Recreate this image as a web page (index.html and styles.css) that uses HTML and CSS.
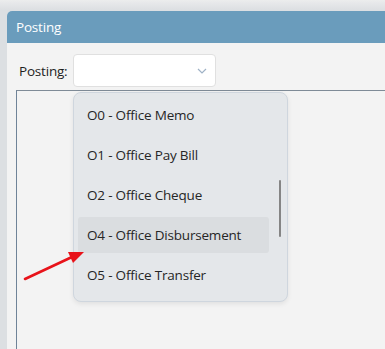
FILE: index.html
```html
<!DOCTYPE html>
<html>
<head>
<meta charset="utf-8">
<link rel="stylesheet" href="styles.css">
</head>
<body>
<div class="page">
  <div class="panel">
    <div class="panel-header">Posting</div>
    <div class="field-row">
      <span class="label">Posting:</span>
      <div class="select">
        <svg class="chev" width="10" height="6" viewBox="0 0 10 6"><path d="M1 1 L5 5 L9 1" fill="none" stroke="#9fb2c6" stroke-width="1.2"/></svg>
      </div>
    </div>
    <div class="grid-box"></div>
  </div>
  <div class="popup">
    <div class="item">O0 - Office Memo</div>
    <div class="item">O1 - Office Pay Bill</div>
    <div class="item">O2 - Office Cheque</div>
    <div class="item active">O4 - Office Disbursement</div>
    <div class="item">O5 - Office Transfer</div>
    <div class="scrollbar"></div>
  </div>
  <svg class="arrow" width="90" height="60" viewBox="0 0 90 60">
    <line x1="25" y1="279" x2="72" y2="257" transform="translate(0,-230)" stroke="#e8131a" stroke-width="2.6" stroke-linecap="round"/>
    <polygon points="84,252 68,252 73,263" transform="translate(0,-230)" fill="#e8131a"/>
  </svg>
</div>
</body>
</html>
```
FILE: styles.css
```css
html, body {
  margin: 0;
  padding: 0;
}
body {
  width: 385px;
  height: 349px;
  overflow: hidden;
  font-family: "Open Sans", "Noto Sans", sans-serif;
  background: #dfe2e5;
}
.page {
  position: relative;
  height: 349px;
  padding: 11px 0 0 7px;
  box-sizing: border-box;
  background: linear-gradient(to bottom, #eceded 0px, #e7e8ea 3px, #dcdfe2 10px, #dcdfe2 11px);
}
.panel {
  height: 338px;
  background: #f3f3f3;
  border-top-left-radius: 5px;
  overflow: hidden;
  display: flex;
  flex-direction: column;
}
.panel-header {
  height: 32px;
  background: #6a9cbc;
  color: #fff;
  font-size: 13.5px;
  letter-spacing: -0.2px;
  line-height: 32px;
  padding-left: 9px;
}
.field-row {
  display: flex;
  align-items: center;
  padding: 11px 0 0 12px;
}
.label {
  width: 54px;
  font-size: 13.5px;
  letter-spacing: -0.2px;
  color: #1e1e1e;
}
.select {
  width: 133px;
  height: 31px;
  background: #fff;
  border: 1px solid #e0e0e0;
  border-radius: 4px;
  display: flex;
  align-items: center;
  justify-content: flex-end;
  padding-right: 8px;
  box-sizing: content-box;
}
.chev {
  display: block;
}
.grid-box {
  flex: 1;
  margin: 3px 0 0 9px;
  border-top: 1px solid #7f8b97;
  border-left: 1px solid #6f8398;
}
.popup {
  position: absolute;
  left: 73px;
  top: 92px;
  background: #e4e7ea;
  border: 1px solid #cfd6de;
  border-radius: 8px;
  box-shadow: 0 2px 5px rgba(0,0,0,0.08);
  padding: 2px 18px 0 4px;
  box-sizing: border-box;
  width: 215px;
  height: 210px;
}
.item {
  height: 36px;
  margin: 2px 0 4px 0;
  border-radius: 3px;
  padding-left: 9px;
  font-size: 13.5px;
  letter-spacing: -0.2px;
  line-height: 36px;
  color: #262626;
}
.item.active {
  background: #dadde0;
}
.scrollbar {
  position: absolute;
  left: 205px;
  top: 87px;
  width: 2px;
  height: 57px;
  background: #858585;
  border-radius: 1px;
}
.arrow {
  position: absolute;
  left: 0;
  top: 230px;
}
```
